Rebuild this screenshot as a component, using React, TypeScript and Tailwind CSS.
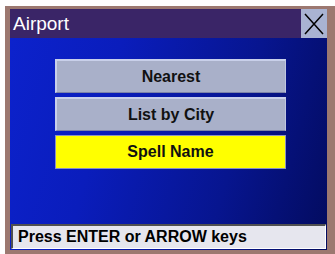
import React from "react";

const font = { fontFamily: '"Liberation Sans", Arial, sans-serif' };

function MenuButton({ label, selected }: { label: string; selected?: boolean }) {
  return (
    <div
      className={
        selected
          ? "h-[34px] w-full flex items-center justify-center bg-[#ffff00] border border-[#8c92c0] text-[16px] font-bold text-[#111111]"
          : "h-[34px] w-full flex items-center justify-center bg-[#a9b0c9] border-t-2 border-l-2 border-t-[#c9d0ea] border-l-[#c9d0ea] border-b border-r border-b-[#7d84a8] border-r-[#c0c6e0] text-[16px] font-bold text-[#111111]"
      }
      style={font}
    >
      {label}
    </div>
  );
}

export default function App() {
  return (
    <div className="w-[335px] h-[254px] bg-white pl-[5px] pt-[6px] overflow-hidden" style={font}>
      <div className="w-[330px] h-[248px] bg-[#9c7870] pt-[3px] pl-[5px] pr-[3px] pb-[4px] flex flex-col">
        <div className="flex-1 flex flex-col w-[317px]">
          <div className="h-[29px] bg-[#3a2567] flex items-center">
            <div className="flex-1 pl-[3px] text-white text-[19px] leading-none">Airport</div>
            <div className="w-[26px] h-[29px] bg-[#a9b3d2] flex items-center justify-center">
              <svg width="20" height="22" viewBox="0 0 20 22">
                <path d="M1 1 L19 21 M19 1 L1 21" stroke="#000" strokeWidth="1.5" fill="none" />
              </svg>
            </div>
          </div>
          <div className="flex-1 flex flex-col bg-[linear-gradient(105deg,#0c22cc_0%,#0a1dbc_30%,#07158f_68%,#030b5e_100%)]">
            <div className="flex-1 flex flex-col gap-[4px] pt-[21px] pl-[45px] pr-[41px]">
              <MenuButton label="Nearest" />
              <MenuButton label="List by City" />
              <MenuButton label="Spell Name" selected />
            </div>
            <div className="mx-[1px] mb-[1px] h-[25px] bg-[#e6e6ee] border-t-2 border-l-2 border-t-[#505050] border-l-[#505050] border-b border-r border-b-[#ffffff] border-r-[#ffffff] flex items-center pl-[5px] text-[16px] font-bold text-black">
              Press ENTER or ARROW keys
            </div>
          </div>
        </div>
      </div>
    </div>
  );
}
